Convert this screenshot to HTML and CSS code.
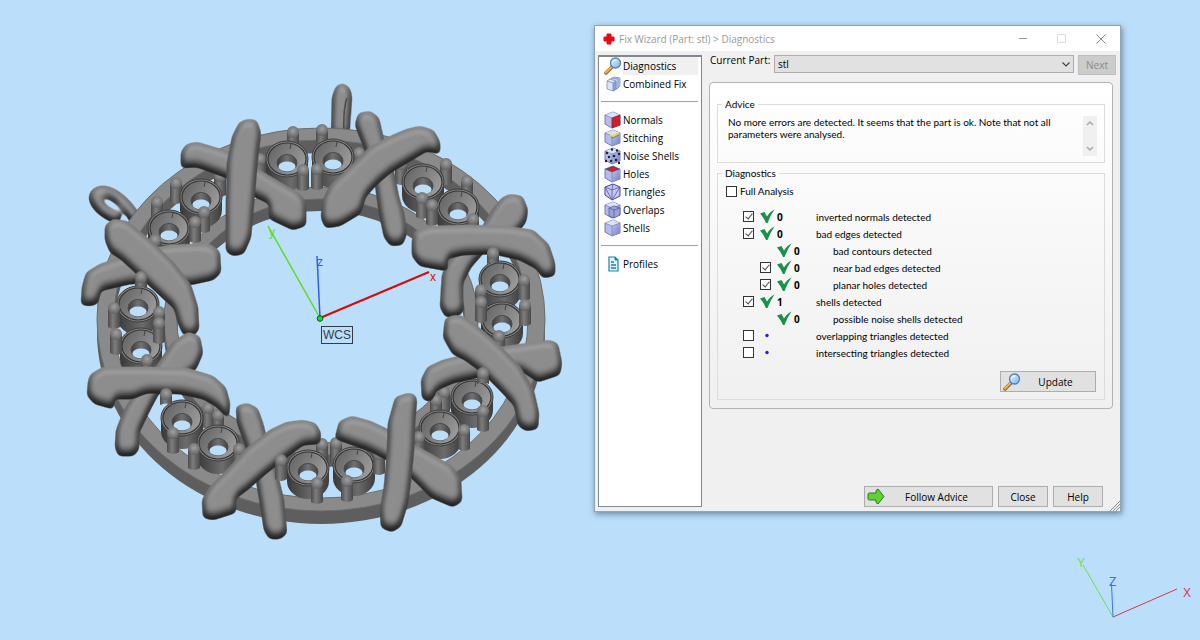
FILE: index.html
```html
<!DOCTYPE html>
<html lang="en">
<head>
<meta charset="utf-8">
<title>Fix Wizard</title>
<link rel="stylesheet" href="styles.css">
</head>
<body>
<main class="viewport">
<svg class="model" width="600" height="560" viewBox="0 0 600 560" role="img" aria-label="Ring model with coordinate axes">
<defs>
<filter id="round" x="-20%" y="-20%" width="140%" height="140%" color-interpolation-filters="sRGB">
<feGaussianBlur in="SourceAlpha" stdDeviation="2.700"/>
<feComponentTransfer result="shape"><feFuncA type="linear" slope="5" intercept="-1.800"/></feComponentTransfer>
<feGaussianBlur in="shape" stdDeviation="3.800"/>
<feDiffuseLighting surfaceScale="6" diffuseConstant="1" lighting-color="#9a9a9a"><feDistantLight azimuth="270" elevation="66"/></feDiffuseLighting>
<feComposite in2="shape" operator="in" result="lit"/>
<feOffset in="shape" dy="-9"/>
<feGaussianBlur stdDeviation="2" result="top"/>
<feFlood flood-color="#222" flood-opacity=".32"/>
<feComposite in2="shape" operator="in"/>
<feComposite in2="top" operator="out" result="side"/>
<feMerge><feMergeNode in="lit"/><feMergeNode in="side"/></feMerge>
</filter>
<linearGradient id="pinFill"><stop offset="0" stop-color="#4b4b4b"/><stop offset=".4" stop-color="#7d7d7d"/><stop offset="1" stop-color="#484848"/></linearGradient>
<radialGradient id="ball" cx=".5" cy=".4" r=".6"><stop offset="0" stop-color="#a0a0a0"/><stop offset="1" stop-color="#626262"/></radialGradient>
<linearGradient id="wall"><stop offset="0" stop-color="#383838"/><stop offset=".6" stop-color="#6c6c6c"/><stop offset="1" stop-color="#3c3c3c"/></linearGradient>
<linearGradient id="funnel" x2="1" y2=".5"><stop offset="0" stop-color="#5f5f5f"/><stop offset="1" stop-color="#999"/></linearGradient>
<linearGradient id="bore"><stop offset="0" stop-color="#3c3c3c"/><stop offset=".5" stop-color="#727272"/><stop offset="1" stop-color="#444"/></linearGradient>
<g id="pin"><path d="M-6 6V25Q0 29 6 25V6z" fill="url(#pinFill)"/><ellipse cy="6" rx="6" ry="6" fill="url(#ball)"/></g>
<g id="stub"><path d="M-6 6V17Q0 14 6 17V6z" fill="url(#pinFill)"/><ellipse cy="6" rx="6" ry="6" fill="url(#ball)"/></g>
<g id="cup">
<path d="M-21 0V13A21 18 0 0 0 21 13V0z" fill="url(#wall)"/>
<ellipse rx="21" ry="18" fill="#858585" stroke="#3c3c3c"/>
<ellipse rx="19" ry="16" fill="url(#funnel)" stroke="#343434" stroke-width="1.2"/>
<ellipse cy="4" rx="10" ry="8.5" fill="url(#bore)" stroke="#4a4a4a"/>
<ellipse cy="7.500" rx="8.500" ry="5" fill="#bbdefb"/>
<path d="M4-15L3-10" stroke="#333" stroke-width=".8"/>
</g>
<path id="band" fill-rule="evenodd" d="M97 319.500a224 191.500 0 1 0 448 0a224 191.500 0 1 0-448 0zM114 319a207 179 0 1 0 414 0a207 179 0 1 0-414 0z"/>
<path id="inner" fill-rule="evenodd" d="M164 321a157 134 0 1 0 314 0a157 134 0 1 0-314 0zM177 321a144 122 0 1 0 288 0a144 122 0 1 0-288 0z"/>
</defs>
<g class="shaded">
<path d="M137 222C128 204 112 190 100 192C89 195 96 210 120 219" fill="none" stroke="#000" stroke-width="12"/>
</g>
<path class="shaded" d="M331 138L332 97L336 86L343 83L350 88L352 97L349 138z"/>
<path d="M344 134Q343 108 347 98" fill="none" stroke="#4a4a4a" stroke-width="1.5"/>
<g fill="#5e5e5e"><use href="#band" y="13"/><use href="#band" y="7"/></g>
<use href="#band" fill="#8a8a8a" stroke="#6c6c6c"/>
<g fill="#5c5c5c"><use href="#inner" y="12"/><use href="#inner" y="6"/></g>
<use href="#inner" fill="#868686" stroke="#6a6a6a"/>
<!-- prongs behind the settings -->
<g>
<use href="#pin" x="293" y="126"/><use href="#pin" x="322" y="124"/><use href="#pin" x="260" y="153"/><use href="#pin" x="359" y="147"/>
<use href="#pin" x="220" y="170"/><use href="#pin" x="176" y="177"/><use href="#pin" x="157" y="196"/><use href="#pin" x="401" y="158"/>
<use href="#pin" x="446" y="158"/><use href="#pin" x="467" y="175"/><use href="#pin" x="208" y="402"/><use href="#pin" x="218" y="409"/>
<use href="#pin" x="322" y="438"/><use href="#pin" x="336" y="437"/><use href="#pin" x="444" y="386"/><use href="#pin" x="436" y="394"/>
</g>
<!-- stone settings -->
<g>
<use href="#cup" x="287" y="159"/><use href="#cup" x="333" y="157"/><use href="#cup" x="201" y="197"/><use href="#cup" x="169" y="228"/>
<use href="#cup" x="423" y="182"/><use href="#cup" x="458" y="207"/><use href="#cup" x="138" y="304"/><use href="#cup" x="141" y="346"/>
<use href="#cup" x="500" y="279"/><use href="#cup" x="502" y="320"/><use href="#cup" x="182" y="418"/><use href="#cup" x="218" y="443"/>
<use href="#cup" x="472" y="397"/><use href="#cup" x="440" y="428"/><use href="#cup" x="308" y="468"/><use href="#cup" x="354" y="465"/>
</g>
<!-- prongs in front of the settings -->
<g>
<use href="#pin" x="303" y="164"/><use href="#pin" x="317" y="163"/><use href="#pin" x="204" y="206"/><use href="#pin" x="195" y="216"/>
<use href="#pin" x="155" y="234"/><use href="#pin" x="422" y="192"/><use href="#pin" x="432" y="199"/><use href="#pin" x="473" y="213"/>
<use href="#pin" x="114" y="302"/><use href="#pin" x="159" y="306"/><use href="#pin" x="159" y="317"/><use href="#pin" x="116" y="328"/>
<use href="#pin" x="147" y="354"/><use href="#pin" x="524" y="274"/><use href="#pin" x="481" y="284"/><use href="#pin" x="481" y="296"/>
<use href="#pin" x="525" y="299"/><use href="#pin" x="499" y="330"/><use href="#pin" x="173" y="427"/><use href="#pin" x="194" y="443"/>
<use href="#pin" x="239" y="443"/><use href="#pin" x="483" y="405"/><use href="#pin" x="464" y="424"/><use href="#pin" x="419" y="431"/>
<use href="#pin" x="379" y="448"/><use href="#pin" x="317" y="477"/><use href="#pin" x="347" y="475"/>
</g>
<!-- crossed bars, rear bar of each pair first -->
<g class="bars">
<polygon class="shaded" points="197,143 187,145 182,152 182,167 197,166 227,177 253,195 270,203 270,218 293,229 305,225 305,203 300,195 283,185 253,167 227,152"/>
<polygon class="shaded" points="248,120 256,121 260,133 257,157 253,203 250,237 243,253 233,255 227,251 227,203 228,163 233,137 240,123"/>
<polygon class="shaded" points="193,245 210,245 219,252 220,272 213,279 190,284 152,282 130,283 100,290 97,303 90,305 82,304 83,287 87,273 100,265 120,259 150,250 170,246"/>
<polygon class="shaded" points="106,226 113,220 127,222 150,241 173,263 190,285 197,307 198,329 193,335 184,334 179,323 175,308 164,298 150,285 136,272 122,259 111,252 106,240"/>
<polygon class="shaded" points="370,112 359,114 356,125 365,148 375,177 380,213 385,237 391,245 402,244 406,233 403,213 398,197 392,167 383,140 378,118"/>
<polygon class="shaded" points="420,127 433,131 439,142 439,153 427,150 412,159 390,172 377,183 365,196 360,213 340,225 326,227 322,218 323,202 330,187 353,165 370,148 393,136 407,130"/>
<polygon class="shaded" points="510,195 522,197 527,210 525,222 517,232 483,252 470,267 462,283 462,300 463,310 457,316 446,316 441,307 442,290 443,275 448,263 463,247 483,227 493,210 502,199"/>
<polygon class="shaded" points="415,232 430,227 470,226 507,227 533,231 548,245 554,263 554,275 543,277 537,268 520,259 493,253 463,254 446,258 447,270 420,265 413,256 413,240"/>
<polygon class="shaded" points="188,333 199,337 202,353 195,369 158,393 149,410 138,433 138,449 133,455 119,455 116,447 117,430 125,410 138,390 158,365 173,343"/>
<polygon class="shaded" points="91,375 103,368 147,368 187,369 213,377 225,388 229,403 228,417 217,406 203,398 180,393 147,392 132,398 113,398 113,408 95,403 88,395 89,382"/>
<polygon class="shaded" points="237,407 247,404 257,409 262,423 267,443 275,467 283,500 286,533 280,538 270,538 265,530 262,510 257,480 247,447 238,423"/>
<polygon class="shaded" points="303,421 315,424 320,433 319,443 303,444 283,459 263,475 247,489 235,498 235,512 213,519 204,517 203,500 210,488 227,471 247,449 270,431 287,423"/>
<polygon class="shaded" points="352,417 340,422 336,438 350,443 370,450 387,459 413,478 432,497 453,506 461,501 460,480 452,467 433,456 415,446 387,430 370,422"/>
<polygon class="shaded" points="408,394 396,398 389,423 388,450 385,487 381,510 382,527 392,531 400,526 407,503 410,480 413,450 414,423 416,400 414,395"/>
<polygon class="shaded" points="549,341 557,344 561,363 559,374 538,381 520,369 490,374 453,382 437,389 430,401 423,398 422,380 428,368 443,361 467,355 507,347"/>
<polygon class="shaded" points="455,316 446,319 444,337 453,353 465,359 484,373 500,389 515,405 519,425 526,430 537,428 538,413 533,391 520,368 500,347 477,327 463,317"/>
</g>
<use href="#stub" x="141" y="271"/><use href="#stub" x="493" y="247"/><use href="#stub" x="166" y="388"/><use href="#stub" x="483" y="367"/><use href="#pin" x="281" y="454"/>
<g fill="none" stroke-width="1.500">
<path stroke="#5fdc1e" d="M268 226L320 318"/><path stroke="#2f5cf0" d="M317 256L320 318"/><path stroke="#d80a0a" stroke-width="2" d="M320 318L429 272"/>
</g>
<circle cx="320" cy="318.500" r="2.800" fill="#0be33b" stroke="#164e1a"/>
<rect x="321.500" y="326.500" width="31" height="17" fill="none" stroke="#333b44"/>
<g class="axis-text"><text x="269" y="236" fill="#5fdc1e">y</text><text x="317" y="266" fill="#2f5cf0">z</text><text x="430" y="281" fill="#d80a0a">x</text><text x="323" y="339" fill="#333b44">WCS</text></g>
</svg>

<svg class="compass" width="130" height="90" viewBox="1070 550 130 90" role="img" aria-label="View orientation">
<g fill="none"><path stroke="#72dc4c" d="M1083 565L1113 617"/><path stroke="#3f6ff5" d="M1111.500 584L1113 617"/><path stroke="#d33a44" d="M1113 617L1177 589"/></g>
<g class="axis-text"><text x="1077" y="567" fill="#72dc4c">Y</text><text x="1109" y="586" fill="#3f6ff5">Z</text><text x="1183" y="597" fill="#d33a44">X</text></g>
</svg>

<svg class="sprites" aria-hidden="true">
<defs>
<linearGradient id="steel" x2="1" y2="1"><stop offset="0" stop-color="#bfc6ef"/><stop offset="1" stop-color="#727bc4"/></linearGradient>
<linearGradient id="lens" x2="1" y2="1"><stop offset="0" stop-color="#e8f6ff"/><stop offset="1" stop-color="#79b4e6"/></linearGradient>
</defs>
<symbol id="i-lens" viewBox="0 0 18 18"><path d="M8 10L2 16" stroke="#8a6430" stroke-width="3.500" stroke-linecap="round"/><path d="M7.500 10L2 15.500" stroke="#efb64e" stroke-width="2" stroke-linecap="round"/><circle cx="11.500" cy="6" r="5" fill="url(#lens)" stroke="#4f83b8" stroke-width="1.300"/><path d="M8.500 5Q10 2.500 12.500 3" fill="none" stroke="#fff"/></symbol>
<symbol id="i-cube" viewBox="0 0 18 18"><path d="M1 4L9 1L16 4V14L8 17L1 13z" fill="#b4bcea" stroke="#5c659c" stroke-width=".8"/><path d="M1 4L9 1L16 4L8 7z" fill="#dce1fa"/><path d="M8 7L16 4V14L8 17z" fill="url(#steel)"/><path d="M1 4L8 7V17M8 7L16 4" fill="none" stroke="#6a73a8" stroke-width=".6"/></symbol>
<symbol id="i-combined" viewBox="0 0 18 18"><g stroke="#6f87b8" stroke-width=".7"><path d="M7 4L10 2L16 3V11L13 14L7 12z" fill="#b8c8ec"/><path d="M5 5L8 3L14 4V13L11 15L5 13z" fill="#cbd7f2"/><path d="M3 6L6 4L12 6V14L9 16L3 14z" fill="#dce5f8"/><path d="M9 8L12 6V14L9 16z" fill="#8ea5d5"/><path d="M3 6L9 8" fill="none"/></g></symbol>
<symbol id="i-normals" viewBox="0 0 18 18"><use href="#i-cube"/><path d="M8 7L16 4V14L8 17z" fill="#d51c27" stroke="#7d2438" stroke-width=".6"/></symbol>
<symbol id="i-stitch" viewBox="0 0 18 18"><use href="#i-cube"/><path d="M6 6L9 7L15 4" fill="none" stroke="#f2e10c" stroke-width="1.800"/><path d="M7 8L9 9L15 6" fill="none" stroke="#554a4a" stroke-width=".5"/></symbol>
<symbol id="i-noise" viewBox="0 0 18 18"><use href="#i-cube"/><g fill="#1a2038"><circle cx="3" cy="6" r="1.200"/><circle cx="8" cy="2.500" r="1.200"/><circle cx="13" cy="3.500" r="1.200"/><circle cx="5" cy="10" r="1.200"/><circle cx="10" cy="9" r="1.300"/><circle cx="15" cy="7" r="1.200"/><circle cx="2" cy="14" r="1.200"/><circle cx="7" cy="14" r="1.200"/><circle cx="12" cy="13" r="1.300"/><circle cx="15" cy="16" r="1.200"/></g></symbol>
<symbol id="i-holes" viewBox="0 0 18 18"><use href="#i-cube"/><path d="M1 4L9 1L16 4L8 7z" fill="#3f456c"/><path d="M3 4L9 2L14.500 4L8 6.500z" fill="#e01b28"/></symbol>
<symbol id="i-tri" viewBox="0 0 18 18"><path d="M1 4L9 1L16 4V13L8 17L1 12z" fill="#c3c7f2" stroke="#454a92"/><path d="M1 4L8 7L16 4M8 7V17M1 4L8 17L16 4M9 1L8 7" fill="none" stroke="#565ba8" stroke-width=".8"/></symbol>
<symbol id="i-overlap" viewBox="0 0 18 18"><use href="#i-cube"/><path d="M5 7L10 5L16 7V14L10 17L5 15z" fill="#98a2dd" stroke="#4c5790" stroke-width=".7"/><path d="M5 7L10 9L16 7M10 9V17" fill="none" stroke="#4c5790" stroke-width=".7"/></symbol>
<symbol id="i-doc" viewBox="0 0 18 18"><path d="M5 2H11L14 5V16H5z" fill="#e5f5fc" stroke="#1781b6" stroke-width="1.200"/><path d="M11 2V5H14" fill="#1781b6" stroke="#1781b6"/><path d="M7 7H10M7 10H12M7 13H12" stroke="#1680bb" stroke-width="1.400"/></symbol>
<symbol id="i-tick" viewBox="0 0 16 15"><path d="M0 4.500L4.500 3L7 7.500Q10 2.500 14.500.500Q10.500 6 7.500 14H6Q4 9 0 4.500z" fill="#17924a"/></symbol>
<symbol id="i-dot" viewBox="0 0 16 15"><circle cx="7" cy="7.500" r="1.700" fill="#1e1ef5"/></symbol>
</svg>

<section class="dialog" aria-label="Fix Wizard">
<header class="titlebar">
<svg class="cross" viewBox="0 0 12 12"><path d="M4 1H8V4H11V8H8V11H4V8H1V4H4z" fill="#e50c14" stroke="#e50c14" stroke-linejoin="round"/></svg>
<h1 class="title">Fix Wizard (Part: stl) &gt; Diagnostics</h1>
<button class="caption-button" aria-label="Minimize"><svg viewBox="0 0 10 10"><path d="M1 4.500H9" stroke="#999"/></svg></button>
<button class="caption-button" aria-label="Maximize" disabled><svg viewBox="0 0 10 10"><path d="M.5.500H8.500V8.500H.5z" fill="none" stroke="#ddd"/></svg></button>
<button class="caption-button" aria-label="Close window"><svg viewBox="0 0 10 10"><path d="M.5.500L9.500 9.500M9.500.500L.5 9.500" stroke="#888" fill="none"/></svg></button>
</header>
<div class="body">
<nav class="sidebar">
<button class="nav-item selected"><svg><use href="#i-lens"/></svg><span>Diagnostics</span></button>
<button class="nav-item"><svg><use href="#i-combined"/></svg><span>Combined Fix</span></button>
<hr class="rule">
<button class="nav-item"><svg><use href="#i-normals"/></svg><span>Normals</span></button>
<button class="nav-item"><svg><use href="#i-stitch"/></svg><span>Stitching</span></button>
<button class="nav-item"><svg><use href="#i-noise"/></svg><span>Noise Shells</span></button>
<button class="nav-item"><svg><use href="#i-holes"/></svg><span>Holes</span></button>
<button class="nav-item"><svg><use href="#i-tri"/></svg><span>Triangles</span></button>
<button class="nav-item"><svg><use href="#i-overlap"/></svg><span>Overlaps</span></button>
<button class="nav-item"><svg><use href="#i-cube"/></svg><span>Shells</span></button>
<hr class="rule">
<button class="nav-item"><svg><use href="#i-doc"/></svg><span>Profiles</span></button>
</nav>
<div class="content">
<div class="part-row">
<label for="part">Current Part:</label>
<div class="select-wrap"><select id="part"><option>stl</option></select><svg class="chevron" viewBox="0 0 8 5"><path d="M.5.500L4 4L7.500.500" fill="none" stroke="#444" stroke-width="1.200"/></svg></div>
<button class="button next" disabled>Next</button>
</div>
<div class="panel">
<fieldset class="group advice">
<legend>Advice</legend>
<p>No more errors are detected. It seems that the part is ok. Note that not all parameters were analysed.</p>
<div class="scrollbar"><svg viewBox="0 0 8 5"><path d="M1 4L4 1L7 4" fill="none" stroke="#aaa" stroke-width="1.500"/></svg><svg viewBox="0 0 8 5"><path d="M1 1L4 4L7 1" fill="none" stroke="#aaa" stroke-width="1.500"/></svg></div>
</fieldset>
<fieldset class="group diagnostics">
<legend>Diagnostics</legend>
<div class="full"><input type="checkbox" id="full"><label for="full">Full Analysis</label></div>
<div class="checks">
<div class="check"><input type="checkbox" id="c1" checked><svg><use href="#i-tick"/></svg><b>0</b><label for="c1">inverted normals detected</label></div>
<div class="check"><input type="checkbox" id="c2" checked><svg><use href="#i-tick"/></svg><b>0</b><label for="c2">bad edges detected</label></div>
<div class="check sub"><i></i><svg><use href="#i-tick"/></svg><b>0</b><span>bad contours detected</span></div>
<div class="check sub"><input type="checkbox" id="c4" checked><svg><use href="#i-tick"/></svg><b>0</b><label for="c4">near bad edges detected</label></div>
<div class="check sub"><input type="checkbox" id="c5" checked><svg><use href="#i-tick"/></svg><b>0</b><label for="c5">planar holes detected</label></div>
<div class="check"><input type="checkbox" id="c6" checked><svg><use href="#i-tick"/></svg><b>1</b><label for="c6">shells detected</label></div>
<div class="check sub"><i></i><svg><use href="#i-tick"/></svg><b>0</b><span>possible noise shells detected</span></div>
<div class="check"><input type="checkbox" id="c8"><svg><use href="#i-dot"/></svg><b></b><label for="c8">overlapping triangles detected</label></div>
<div class="check"><input type="checkbox" id="c9"><svg><use href="#i-dot"/></svg><b></b><label for="c9">intersecting triangles detected</label></div>
</div>
<button class="button update"><svg><use href="#i-lens"/></svg><span>Update</span></button>
</fieldset>
</div>
<footer class="actions">
<button class="button follow"><svg viewBox="0 0 18 18"><path d="M1 6.500Q1 5 2.500 5H9V2.500L11 1L17 8.500L11 16L9 14.500V12H2.500Q1 12 1 10.500z" fill="#62cf32" stroke="#23801a"/></svg><span>Follow Advice</span></button>
<button class="button small">Close</button>
<button class="button small">Help</button>
</footer>
</div>
</div>
<svg class="grip" viewBox="0 0 10 10"><path d="M0 10L10 0M3 10L10 3M6 10L10 6" stroke="#888" fill="none"/></svg>
</section>
</main>
</body>
</html>
```
FILE: styles.css
```css
* { box-sizing: border-box; }
body { margin: 0; font-family: "Open Sans", "Noto Sans", sans-serif; font-size: 10px; color: #000; }
button, select { font: inherit; color: inherit; }
.viewport { position: relative; min-height: 100vh; background: #bbdefb; overflow: hidden; }
.model { display: block; }
.shaded { filter: url(#round); }
.bars { stroke: #000; stroke-width: 2px; stroke-linejoin: round; }
.axis-text { font-family: "Liberation Sans", Arial, sans-serif; font-size: 12px; }
.compass { position: absolute; right: 0; bottom: 0; }
.sprites { position: absolute; width: 0; height: 0; }

.dialog { position: absolute; left: 594px; top: 25px; width: 527px; background: #f0f0f0; border: 1px solid #92a4b3; box-shadow: 1px 2px 6px rgba(30, 60, 90, .55); }
.titlebar { display: flex; align-items: center; height: 25px; padding-left: 8px; background: #fff; }
.cross { width: 12px; height: 12px; }
.title { flex: 1; margin: 0 0 0 4px; font-size: 10px; font-weight: 400; color: #999; }
.caption-button { display: grid; place-items: center; width: 39px; height: 23px; padding: 0; border: 0; background: none; }
.caption-button svg { width: 10px; height: 10px; }
.body { display: flex; padding: 4px 4px 4px 3px; }
.sidebar { width: 104px; padding: 0 3px 0 2px; background: #fff; border: 1px solid #828790; border-top-width: 2px; }
.nav-item { display: flex; align-items: center; gap: 1px; width: 100%; height: 18px; padding: 0 0 0 3px; border: 0; background: none; text-align: left; white-space: nowrap; }
.nav-item svg { flex: none; width: 18px; height: 18px; }
.nav-item span { flex: 1; line-height: 18px; }
.selected span { background: #f0f0f0; }
.rule { height: 1px; margin: 8px 0 9px; border: 0; background: #a0a0a0; }

.content { flex: 1; display: flex; flex-direction: column; padding-left: 7px; }
.part-row { display: flex; gap: 4px; height: 20px; }
.part-row label { width: 61px; padding-left: 1px; line-height: 11px; white-space: nowrap; }
.select-wrap { position: relative; flex: 1; }
.select-wrap select { appearance: none; width: 100%; height: 18px; padding: 0 3px; border: 1px solid #adadad; border-radius: 0; background: #e1e1e1; }
.chevron { position: absolute; right: 4px; top: 7px; width: 8px; height: 5px; pointer-events: none; }
.button { display: flex; align-items: center; justify-content: center; height: 21px; padding: 0; border: 1px solid #adadad; background: #e1e1e1; }
.button svg { width: 18px; height: 18px; margin-left: 2px; }
.button span { flex: 1; text-align: center; }
.next { width: 38px; height: 20px; border-color: #bfbfbf; background: #ccc; color: #8a8a8a; }
.panel { margin: 7px 3px 0 0; padding: 14px 7px 8px; border: 1px solid #b4b4b4; border-radius: 4px; background: linear-gradient(#fff, #f0f0f0); font-family: Lato, "Open Sans", sans-serif; }
.group { min-width: 0; margin: 0; border: 1px solid #dcdcdc; }
.group legend { padding: 0 3px; line-height: 14px; }
.advice { display: flex; justify-content: space-between; height: 66px; padding: 5px 7px 5px 4px; }
.advice p { width: 345px; margin: 0 0 0 6px; line-height: 12px; }
.scrollbar { display: flex; flex-direction: column; justify-content: space-between; align-items: center; width: 14px; height: 40px; padding: 5px 0; background: #f0f0f0; }
.scrollbar svg { width: 8px; height: 5px; }
.diagnostics { display: flex; flex-direction: column; margin-top: 3px; padding: 4px 8px 7px 4px; }
.full { display: flex; align-items: center; gap: 3px; height: 14px; margin-left: 4px; }
input { appearance: none; flex: none; position: relative; width: 11px; height: 11px; margin: 0; border: 1px solid #333; background: #fff; }
input:checked::after { content: ""; position: absolute; left: 3px; top: 0; width: 3px; height: 6px; border: solid #444; border-width: 0 1px 1px 0; transform: rotate(40deg); }
.checks { padding: 10px 0 0 21px; }
.check { display: grid; grid-template-columns: 17px 17px 39px 1fr; align-items: center; height: 17px; }
.check svg { width: 16px; height: 15px; }
.check b { font-family: "Open Sans", sans-serif; }
.sub { margin-left: 17px; }
.update { align-self: flex-end; width: 96px; margin-top: 10px; font-family: "Open Sans", sans-serif; }
.update span { padding-right: 5px; }
.actions { display: flex; gap: 5px; justify-content: flex-end; margin: 77px 13px 0 0; }
.follow { width: 129px; }
.follow span { padding-right: 4px; }
.small { width: 50px; }
.grip { position: absolute; right: 0; bottom: 0; width: 10px; height: 10px; }
```
